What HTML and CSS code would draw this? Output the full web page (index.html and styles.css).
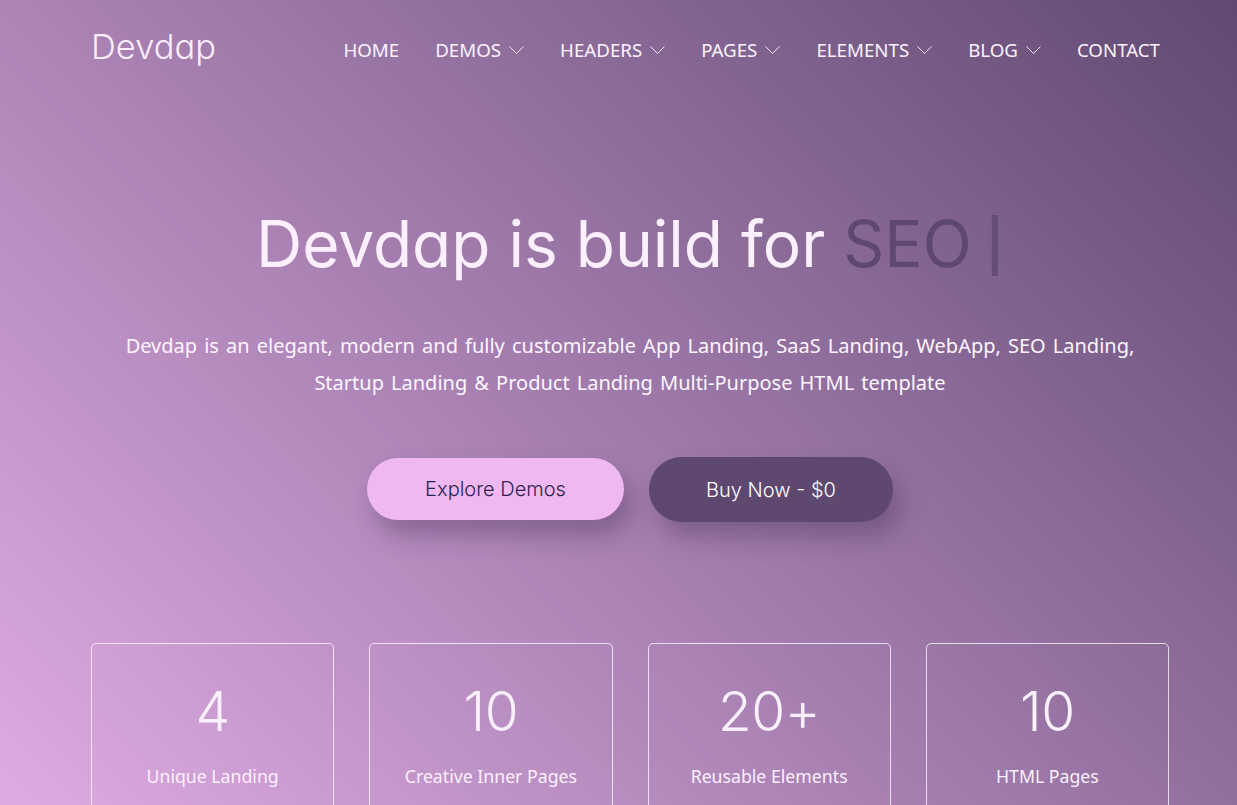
FILE: index.html
```html
<!DOCTYPE html>
<html lang="en">
<head>
<meta charset="utf-8">
<title>Devdap</title>
<link rel="stylesheet" href="styles.css">
</head>
<body>
<div class="hero">
  <header class="topbar">
    <a class="logo" href="#">Devdap</a>
    <nav class="nav">
      <a href="#">HOME</a>
      <a href="#">DEMOS <svg class="chev" viewBox="0 0 15 8"><polyline points="0.5,0.5 7.5,7.5 14.5,0.5"/></svg></a>
      <a href="#">HEADERS <svg class="chev" viewBox="0 0 15 8"><polyline points="0.5,0.5 7.5,7.5 14.5,0.5"/></svg></a>
      <a href="#">PAGES <svg class="chev" viewBox="0 0 15 8"><polyline points="0.5,0.5 7.5,7.5 14.5,0.5"/></svg></a>
      <a href="#">ELEMENTS <svg class="chev" viewBox="0 0 15 8"><polyline points="0.5,0.5 7.5,7.5 14.5,0.5"/></svg></a>
      <a href="#">BLOG <svg class="chev" viewBox="0 0 15 8"><polyline points="0.5,0.5 7.5,7.5 14.5,0.5"/></svg></a>
      <a href="#">CONTACT</a>
    </nav>
  </header>
  <section class="intro">
    <h1 class="title">Devdap is build for <span class="typed">SEO</span> <span class="cursor">|</span></h1>
    <p class="lead">Devdap is an elegant, modern and fully customizable App Landing, SaaS Landing, WebApp, SEO Landing,<br>Startup Landing &amp; Product Landing Multi-Purpose HTML template</p>
    <div class="actions">
      <a class="btn btn-light" href="#">Explore Demos</a>
      <a class="btn btn-dark" href="#">Buy Now - $0</a>
    </div>
  </section>
  <section class="stats">
    <div class="card"><div class="num">4</div><div class="label">Unique Landing Pages</div></div>
    <div class="card"><div class="num">10</div><div class="label">Creative Inner Pages</div></div>
    <div class="card"><div class="num">20+</div><div class="label">Reusable Elements</div></div>
    <div class="card"><div class="num">10</div><div class="label">HTML Pages</div></div>
  </section>
</div>
</body>
</html>
```
FILE: styles.css
```css
* { box-sizing: border-box; }
html, body { margin: 0; height: 100%; overflow: hidden; }
body { font-family: "Noto Sans", sans-serif; color: #fff; }
a { color: inherit; text-decoration: none; }

.hero {
  width: 1260px;
  height: 1080px;
  padding: 0 91px;
  background: linear-gradient(45deg, #f0b8f2 0%, #5e4870 100%);
}

.topbar {
  display: flex;
  justify-content: space-between;
  align-items: center;
  height: 97px;
  padding-right: 9px;
}
.logo {
  font-family: Inter, sans-serif;
  font-feature-settings: "cv11" 1;
  font-weight: 300;
  font-size: 34.5px;
  color: #fbeefd;
  position: relative;
  top: -2px;
}
.nav {
  display: flex;
  gap: 36px;
  font-weight: 400;
  font-size: 18.7px;
  color: #fbf3fd;
  position: relative;
  top: 1px;
}
.nav a { display: flex; align-items: center; gap: 8px; white-space: nowrap; }
.chev { width: 15px; height: 8px; fill: none; stroke: #f3e6f6; stroke-width: 1; }

.intro { text-align: center; padding-top: 107px; }
.title {
  margin: 0;
  font-family: Inter, sans-serif;
  font-feature-settings: "cv11" 1;
  font-weight: 400;
  font-size: 64px;
  line-height: 80px;
  color: #fcf0fe;
}
.typed { color: #5e4870; font-weight: 400; }
.cursor {
  color: #5e4870;
  font-size: 51px;
  font-weight: 600;
  line-height: 0;
  margin-left: -4px;
  opacity: .8;
  vertical-align: 3px;
}
.lead {
  margin: 43px 0 0;
  font-weight: 400;
  font-size: 20px;
  line-height: 37px;
  word-spacing: 1.9px;
  color: #fdf5ff;
}
.actions {
  display: flex;
  justify-content: center;
  align-items: center;
  gap: 25px;
  margin-top: 56px;
}
.btn {
  display: flex;
  align-items: center;
  justify-content: center;
  border-radius: 33px;
  font-family: Inter, sans-serif;
  font-feature-settings: "cv11" 1;
  font-size: 20px;
  font-weight: 300;
  box-shadow: 8px 15px 25px rgba(60, 40, 80, .35);
}
.btn-light { width: 257px; height: 62px; margin-bottom: 1px; background: #f0b8f2; color: #2d2350; }
.btn-dark { width: 244px; height: 65px; background: #5e4870; color: #fff; }

.stats {
  display: grid;
  grid-template-columns: repeat(4, 1fr);
  gap: 35px;
  margin-top: 121px;
}
.card {
  border: 1px solid rgba(255, 255, 255, .75);
  border-radius: 5px;
  padding: 33px 30px;
  text-align: center;
  height: 240px;
}
.num {
  font-family: Inter, sans-serif;
  font-weight: 300;
  font-size: 55px;
  line-height: 68px;
  letter-spacing: -.5px;
  color: #fbf0fd;
}
.label {
  margin-top: 14px;
  font-size: 17.7px;
  font-weight: 400;
  line-height: 35px;
  color: #fbf0fd;
}
```
